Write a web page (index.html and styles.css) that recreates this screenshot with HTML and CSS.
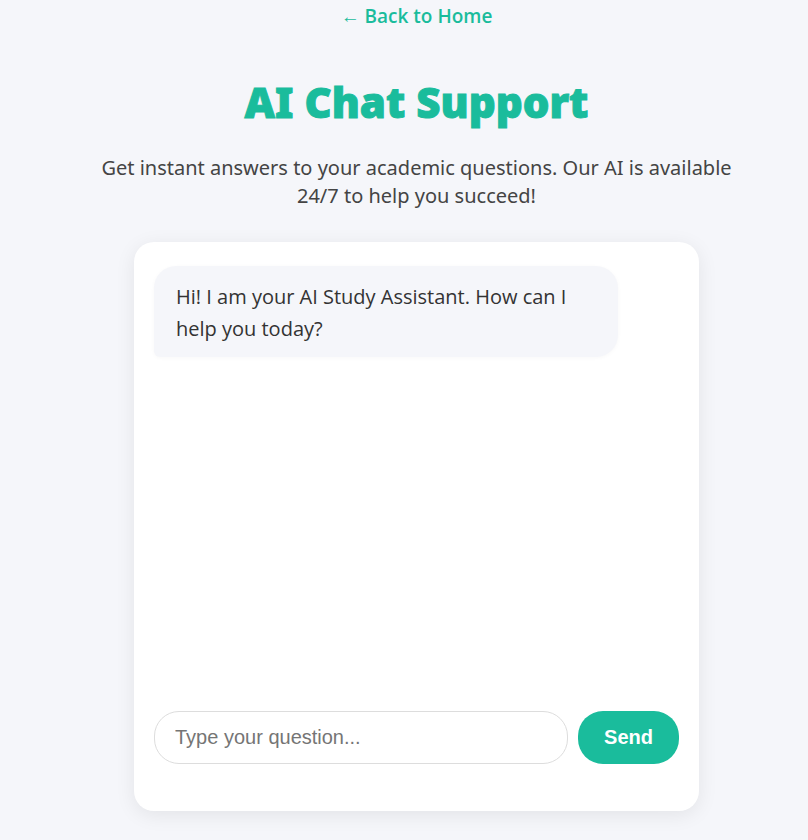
FILE: index.html
```html
<!DOCTYPE html>
<html lang="en">
<head>
<meta charset="utf-8">
<meta name="viewport" content="width=device-width, initial-scale=1">
<title>AI Chat Support</title>
<link rel="stylesheet" href="styles.css">
</head>
<body>
<main class="page">
  <a class="back-link" href="#">← Back to Home</a>
  <h1 class="title">AI Chat Support</h1>
  <p class="intro">Get instant answers to your academic questions. Our AI is available 24/7 to help you succeed!</p>
  <section class="chat" aria-label="Chat">
    <div class="messages">
      <p class="message">Hi! I am your AI Study Assistant. How can I help you today?</p>
    </div>
    <form class="composer">
      <input class="question" type="text" placeholder="Type your question..." aria-label="Type your question">
      <button class="send" type="button">Send</button>
    </form>
  </section>
</main>
</body>
</html>
```

FILE: styles.css
```css
* {
  box-sizing: border-box;
}

body {
  margin: 0;
  background: #f5f6fa;
  color: #222f3e;
  font-family: "Segoe UI", "Open Sans", "Noto Sans", sans-serif;
}

.page {
  display: flex;
  flex-direction: column;
  align-items: center;
  padding: 2px 72px 29px 97px;
}

.back-link {
  color: #1abc9c;
  font-size: 19px;
  font-weight: 600;
  line-height: 28px;
  text-decoration: none;
}

.title {
  margin: 43px 0 0;
  color: #1abc9c;
  font-family: "Segoe UI", "Noto Sans", "Open Sans", sans-serif;
  font-size: 42px;
  font-weight: 900;
  line-height: 58px;
  text-align: center;
  -webkit-text-stroke: 1px #1abc9c;
}

.intro {
  max-width: 660px;
  margin: 23px 0 32px;
  color: #444;
  font-family: "Segoe UI", "Noto Sans", "Open Sans", sans-serif;
  font-size: 20px;
  line-height: 28px;
  text-align: center;
}

.chat {
  display: flex;
  flex-direction: column;
  width: 100%;
  max-width: 565px;
  min-height: 569px;
  padding: 24px 20px 47px;
  border-radius: 20px;
  background: #fff;
  box-shadow: 0 4px 20px rgba(0, 0, 0, 0.08);
}

.messages {
  flex: 1;
}

.message {
  width: 464px;
  max-width: 100%;
  margin: 0;
  padding: 15px 22px 12px;
  border-radius: 22px 22px 22px 6px;
  background: #f5f6fa;
  box-shadow: 0 1px 4px rgba(0, 0, 0, 0.03);
  color: #333;
  font-size: 20px;
  line-height: 32px;
}

.composer {
  display: flex;
  gap: 10px;
}

.question {
  flex: 1;
  min-width: 0;
  height: 53px;
  padding: 0 20px;
  border: 1px solid #ddd;
  border-radius: 25px;
  background: #fff;
  font-family: "Liberation Sans", Arial, sans-serif;
  font-size: 20px;
}

.question::placeholder {
  color: #757575;
}

.send {
  width: 101px;
  height: 53px;
  border: 0;
  border-radius: 25px;
  background: #1abc9c;
  color: #fff;
  font-family: "Liberation Sans", Arial, sans-serif;
  font-size: 20px;
  font-weight: 700;
}
```
